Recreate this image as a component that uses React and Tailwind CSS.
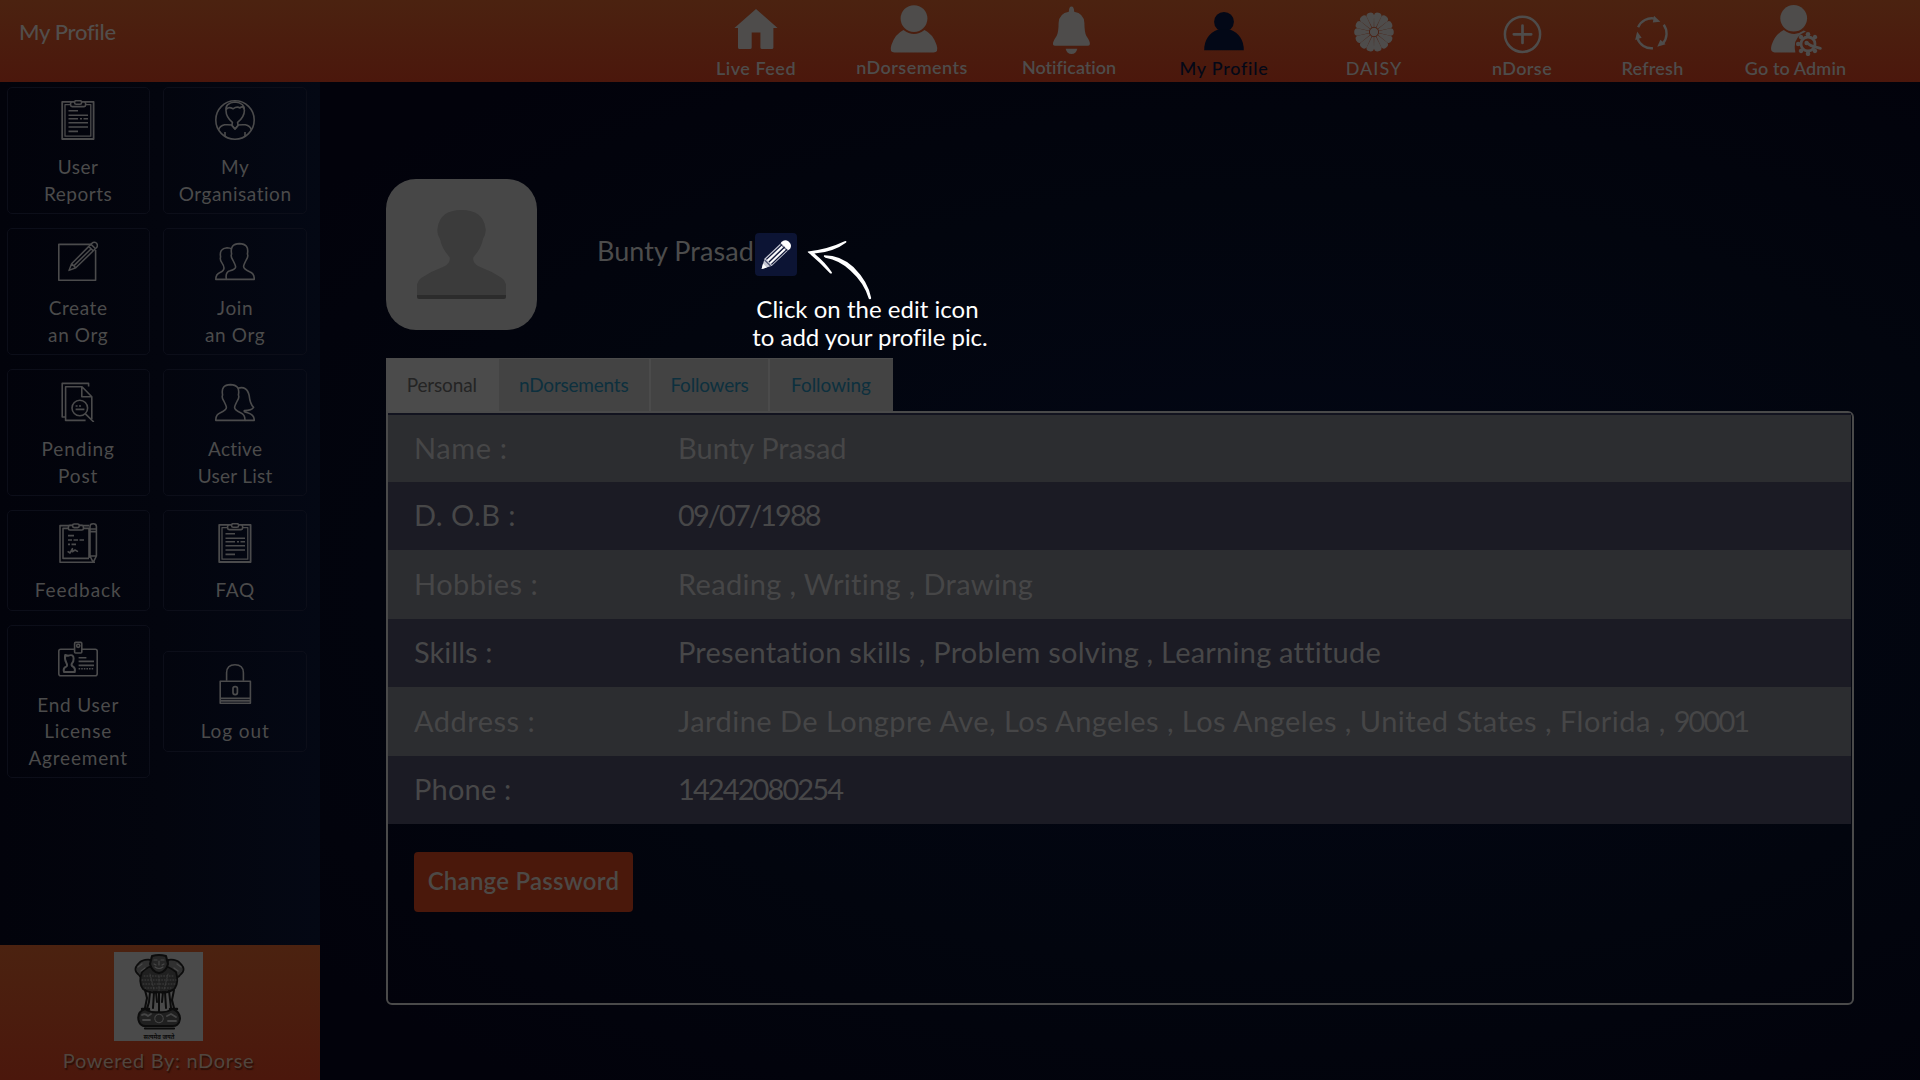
import React from 'react';

/* ---------- top navigation icons (60 x 56 canvas) ---------- */
const NavSvg = ({ children, className = '' }) => (
  <svg viewBox="0 0 60 56" className={`h-14 w-[60px] shrink-0 ${className}`} fill="currentColor">{children}</svg>
);

const Home = () => (
  <NavSvg>
    <path d="M30 9 L51.6 28 H47.4 V47.4 Q47.4 49 45.8 49 H36 Q34.4 49 34.4 47.4 V32.4 H25.7 V47.4 Q25.7 49 24 49 H13.6 Q12 49 12 47.4 V28 H8.4 Z" />
  </NavSvg>
);
const Person = () => (
  <NavSvg>
    <ellipse cx="32" cy="18.6" rx="13.4" ry="13.4" />
    <path d="M21.5 30 Q32 38 42.5 30 Q51 34 54.6 45 Q57 52.5 51.5 52.5 H12.5 Q7 52.5 9.4 45 Q13 34 21.5 30 Z" />
  </NavSvg>
);
const Bell = () => (
  <NavSvg>
    <path d="M32.5 6.5 Q35 6.5 35.2 11.8 Q45 13.5 45.4 23 Q45.4 32 47.4 36 Q51.6 42 50.8 44.6 Q50.4 45.8 48.6 45.8 H16.2 Q14.4 45.8 14 44.6 Q13.4 42 17.6 36 Q19.6 32 19.6 23 Q20 13.5 29.8 11.8 Q30 6.5 32.5 6.5 Z" />
    <path d="M26.6 48.8 H38.4 Q37 54 32.5 54 Q28 54 26.6 48.8 Z" />
  </NavSvg>
);
const Bust = () => (
  <NavSvg>
    <circle cx="30" cy="21.8" r="9.9" />
    <path d="M24 29.5 H36 Q49.8 35 49.8 50.2 H10.2 Q10.2 35 24 29.5 Z" />
  </NavSvg>
);
const petals = Array.from({ length: 14 }, (_, i) => (i * 360) / 14 + 12.86);
const Daisy = () => (
  <NavSvg>
    {petals.map((a) => (
      <path key={a} transform={`rotate(${a} 30 32)`} d="M29.1 27 L26.2 15.6 Q26 12.2 30 12.2 Q34 12.2 33.8 15.6 L30.9 27 Z" />
    ))}
    <circle cx="30" cy="32" r="4.2" />
  </NavSvg>
);
const PlusCircle = () => (
  <NavSvg>
    <g fill="none" stroke="currentColor" strokeWidth="2.5" strokeLinecap="round">
      <circle cx="30.5" cy="34.3" r="17.6" />
      <path d="M30.5 25.6 V43 M21.8 34.3 H39.2" strokeWidth="2.7" />
    </g>
  </NavSvg>
);
const Cycle = () => (
  <NavSvg>
    {[0, 120, 240].map((a) => (
      <g key={a} transform={`rotate(${a} 28.6 33.4)`}>
        <path d="M15.1 27.2 A15 15 0 0 1 31.6 18.6" fill="none" stroke="currentColor" strokeWidth="2.4" />
        <path d="M31 15.8 L37.4 21.8 L29.8 22.6 Z" />
      </g>
    ))}
  </NavSvg>
);
const Admin = () => (
  <NavSvg>
    <ellipse cx="27.7" cy="18.3" rx="13.4" ry="13.2" />
    <path d="M17.8 30 Q28 37.5 37.8 30.6 L40 31.6 Q26 37 29.4 52.4 H8.6 Q3.6 52.4 5.6 45 Q9.4 34 17.8 30 Z" />
    <circle cx="42" cy="44" r="7" fill="none" stroke="currentColor" strokeWidth="2.8" />
    {[0, 45, 135, 180, 225, 270, 315].map((a) => (
      <circle key={a} cx="42" cy="34.2" r="2.3" transform={`rotate(${a} 42 44)`} />
    ))}
    <path d="M41 43 L45 45.6 L54.4 48.4" fill="none" stroke="currentColor" strokeWidth="2.8" strokeLinecap="round" />
    <circle cx="40.6" cy="43" r="2.2" />
  </NavSvg>
);

/* ---------- sidebar icons (40 x 40 canvas) ---------- */
const TileSvg = ({ children }) => (
  <svg viewBox="0 0 40 40" className="size-10 shrink-0 text-[#4b4b4c]" fill="none" stroke="currentColor" strokeWidth="1.6" strokeLinejoin="round">
    {children}
  </svg>
);
const Clipboard = () => (
  <TileSvg>
    <rect x="4.2" y="1.8" width="31.4" height="37.2" strokeWidth="1.8" />
    <rect x="7" y="4.6" width="25.8" height="31.6" strokeWidth="1.3" />
    <rect x="12.6" y="2" width="15" height="4.6" rx="1.5" fill="#03040c" />
    <rect x="16.6" y="0.7" width="7" height="3.6" rx="1.5" fill="#03040c" />
    <path d="M10.5 10.8 H20 M10.5 15.2 H30 M10.5 18.8 H20 M22 18.8 H24 M25.5 18.8 H30 M10.5 22.8 H30 M10.5 27 H30 M10.5 31.4 H20" />
  </TileSvg>
);
const Org = () => (
  <TileSvg>
    <circle cx="20" cy="20" r="19.2" />
    <path d="M11 10.5 Q10 3 20 2 Q30 3 29.4 10.5 Q29.4 17 22.6 22.4 L23 25.4 L20 29 L17 25.4 L17.4 22.4 Q11 17 11 10.5 Z M11 10 Q13 6 18 8.8 Q22 6 25 8 Q28 5 29.4 10" />
    <path d="M17 25 Q14 24.6 9.6 24.8 Q4.6 26 3.6 30 M23 25 Q26 24.6 30.4 24.8 Q35.4 26 36.4 30 M17 25.4 L20 29 L23 25.4 M10 32 V37 M30 32 V37" />
  </TileSvg>
);
const Compose = () => (
  <TileSvg>
    <path d="M33 3.4 H0.8 V39.2 H37.6 V9" />
    <path d="M11 29.4 L13.6 22.8 L33.6 2.6 Q36 0.4 38.4 2 Q40.4 4.4 38.4 6.8 L17.8 26.8 Z M13.6 22.8 L17.8 26.8 M30.6 5.4 L35.4 10 M33 3.4 L37.6 7.8 M16 24.6 L33 8" strokeWidth="1.5" />
  </TileSvg>
);
const TwoMen = () => (
  <TileSvg>
    <path d="M11.4 38.4 Q10 31 15 29.8 Q21 28 20.6 25.6 Q20.4 24 17.8 19 Q15.4 15.4 16.6 13 Q14.6 2.8 24.4 2.6 Q34.4 2.8 32.4 13 Q33.6 15.4 31.2 19 Q28.6 24 28.6 25.6 Q28.6 28 34.6 30.8 Q39.6 32.6 39.2 38.4 Z" />
    <path d="M17 8.2 Q15 6.8 12 6.8 Q4 7.4 5.6 16 Q4.6 18.4 6.8 21.6 Q9 24.8 9 27 Q9 29.8 5 31.4 Q0.8 33 0.8 38.4 H11.4" />
  </TileSvg>
);
const ManWoman = () => (
  <TileSvg>
    <path d="M28.6 38.4 H0.8 Q0.6 32.6 5.4 30.8 Q11.4 28 11.4 25.6 Q11.4 24 8.8 19 Q6.4 15.4 7.6 13 Q5.6 2.8 15.4 2.6 Q25.4 2.8 23.4 13 Q24.6 15.4 22.2 19 Q19.6 24 19.6 25.6 Q19.6 28 25.6 30.8 Q30.2 32.6 30 38.4 Z" />
    <path d="M23 6.2 Q32 3.6 34.2 13.6 Q35 22 38.6 25.4 Q36.8 28.6 29.4 28.6 Q28.4 29.8 32.6 30.8 Q39.6 32.8 39.2 38.4 H30" />
  </TileSvg>
);
const DocSearch = () => (
  <TileSvg>
    <path d="M7.4 35 H4.2 V1.4 H30.6 V4.4" />
    <path d="M27.6 38.4 H7.6 V4.8 H24 L33.8 14.8 V37 M23.8 4.8 V14.8 H33.8" />
    <circle cx="21.8" cy="26" r="7.8" />
    <path d="M27.4 31.8 L35.8 40 M17.6 24 H19.6 M21 24 H23 M17.6 27.4 H26.4" strokeWidth="1.7" />
  </TileSvg>
);
const Feedback = () => (
  <TileSvg>
    <path d="M31 2.6 H2 V39.2 H37 M31 5.4 H5 V35.4 H31" />
    <rect x="10.4" y="2.4" width="15" height="4.6" rx="1.5" fill="#03040c" />
    <rect x="14.6" y="1" width="6.6" height="3.6" rx="1.5" fill="#03040c" />
    <path d="M32 33 V3.4 Q32 0.8 35.2 0.8 Q38.4 0.8 38.4 3.4 V33 L35.2 39.4 Z M32 8.6 H38.4 M32 6 H38.4 M32 33 H38.4 M31 5 V35" />
    <path d="M10 12.6 H16 M10 17 H14 M15.5 17 H20 M21.5 17 H26 M10 21.4 H12 M13.5 21.4 H18 M9.6 28.4 L12 30 L14.4 25.6 V28.8 L17 27 L20 28.6" />
  </TileSvg>
);
const Badge = () => (
  <TileSvg>
    <rect x="0.8" y="11.2" width="38.4" height="26.6" rx="2" />
    <rect x="16.6" y="4.4" width="7.2" height="10.6" rx="1" fill="#03040c" />
    <circle cx="20.2" cy="7.8" r="1.6" />
    <path d="M6 34 Q4.8 30 8.2 28.6 Q10 27.6 8.2 24.4 Q6.4 21.8 7.2 17 L10 17.8 Q15.6 15.6 15.6 20.6 Q15.8 23.4 13.8 25.6 Q13 27.6 15 28.6 Q17.6 30 16.8 34 Z" strokeWidth="2" />
    <path d="M20.6 19.8 H28.4 M20.6 23.4 H36 M20.6 27.4 H36" />
    <path d="M20.6 30.8 H36" strokeDasharray="1.6 1" />
  </TileSvg>
);
const Lock = () => (
  <TileSvg>
    <path d="M11.6 16.8 V8.8 Q11.8 0.8 20 0.8 Q28.2 0.8 28.4 8.8 V16.8" />
    <rect x="5.2" y="17.2" width="30.2" height="22" />
    <path d="M5.2 34.4 H35.4 M5.2 36.9 H35.4" />
    <rect x="18" y="22.6" width="4.4" height="8" rx="2" strokeWidth="1.7" />
  </TileSvg>
);

const NAV = [
  { label: 'Live Feed', Icon: Home, box: 'w-20', text: 'font-semibold tracking-[0.5px]' },
  { label: 'nDorsements', Icon: Person, box: 'ml-[60px] w-28', text: 'font-semibold tracking-[0.45px] -mt-[1.5px]' },
  { label: 'Notification', Icon: Bell, box: 'ml-[54px] w-[94px]', text: 'font-semibold tracking-[-0.02px] -mt-[1.5px]' },
  { label: 'My Profile', Icon: Bust, box: 'ml-[64px] w-[88px] text-[#030817]', text: 'font-medium tracking-[0.75px]' },
  { label: 'DAISY', Icon: Daisy, box: 'ml-[78px] w-14', text: 'font-medium tracking-[1px]' },
  { label: 'nDorse', Icon: PlusCircle, box: 'ml-[90px] w-[60px]', text: 'font-semibold tracking-[0.4px]' },
  { label: 'Refresh', Icon: Cycle, box: 'ml-[70px] w-[61px]', text: 'font-semibold tracking-[0.2px]' },
  { label: 'Go to Admin', Icon: Admin, box: 'ml-[62px] w-[101px]', text: 'font-semibold tracking-[0.1px]' },
];

const TILES = [
  { lines: ['User', 'Reports'], Icon: Clipboard, text: 'tracking-[0.5px]' },
  { lines: ['My', 'Organisation'], Icon: Org, text: 'tracking-[0.53px]' },
  { lines: ['Create', 'an Org'], Icon: Compose, text: 'tracking-[0.6px]' },
  { lines: ['Join', 'an Org'], Icon: TwoMen, text: 'tracking-[0.6px]' },
  { lines: ['Pending', 'Post'], Icon: DocSearch, text: 'tracking-[0.85px]' },
  { lines: ['Active', 'User List'], Icon: ManWoman, text: 'tracking-[0.25px]' },
  { lines: ['Feedback'], Icon: Feedback, text: 'tracking-[0.94px]' },
  { lines: ['FAQ'], Icon: Clipboard, text: 'tracking-[0.6px]' },
  { lines: ['End User', 'License', 'Agreement'], Icon: Badge, text: 'tracking-[0.8px]' },
  { lines: ['Log out'], Icon: Lock, text: 'tracking-[0.9px]' },
];

const ROWS = [
  { label: 'Name :', value: 'Bunty Prasad', l: 'tracking-[0.6px]', v: 'tracking-[0.08px]' },
  { label: 'D. O.B :', digits: '09/07/1988', l: 'tracking-[0.45px]' },
  { label: 'Hobbies :', value: 'Reading , Writing , Drawing', l: 'tracking-[0.45px]', v: 'tracking-[0.33px]' },
  { label: 'Skills :', value: 'Presentation skills , Problem solving , Learning attitude', l: 'tracking-[0.05px]', v: 'tracking-[0.23px]' },
  { label: 'Address :', value: 'Jardine De Longpre Ave, Los Angeles , Los Angeles , United States , Florida , ', digits: '90001', l: 'tracking-[0.5px]', v: 'tracking-[0.47px]' },
  { label: 'Phone :', digits: '14242080254', l: 'tracking-[0.2px]' },
];

const TABS = [
  { label: 'Personal', cls: 'w-[112.5px] pr-px bg-[#4b4b4b] text-[#242424] tracking-[-0.15px]' },
  { label: 'nDorsements', cls: 'w-[150.5px] bg-[#434343] text-[#0d303e] tracking-[-0.22px]' },
  { label: 'Followers', cls: 'w-[119px] bg-[#434343] text-[#0d303e] tracking-[-0.22px]' },
  { label: 'Following', cls: 'w-[125px] pr-px bg-[#434343] text-[#0d303e] tracking-[-0.05px]' },
];

const Emblem = () => (
  <svg viewBox="0 0 89 89" className="size-[89px] bg-[#4a4a4a]" fill="none" stroke="#0c0c0c" strokeLinecap="round" strokeLinejoin="round">
    {/* side lions */}
    <path d="M37 8 Q27 6 22 15 Q20 19 25 23 Q27 26 30 25 L38 15 Z M54 8 Q64 6 69 15 Q71 19 66 23 Q64 26 61 25 L53 15 Z" fill="#303030" strokeWidth="1.8" strokeDasharray="2.4 1" />
    {/* mane and chest */}
    <path d="M28 20 Q24 30 29 37 Q36 42 45 40 Q55 42 61 36 Q65 30 62 20 Q52 12 45 14 Q36 12 28 20 Z" fill="#202020" strokeWidth="1.8" />
    <path d="M30 24 H60 M28 28 H62 M29 32 H61 M31 36 H59" stroke="#3e3e3e" strokeWidth="1" strokeDasharray="1 1.8" />
    <path d="M36 22 L40 38 M54 22 L50 38 M45 24 V40" stroke="#3c3c3c" strokeWidth="0.9" strokeDasharray="2 1.4" />
    {/* front lion head */}
    <path d="M38 4 Q45 2 52 4 L54 12 Q52 20 45 21 Q38 20 36 12 Z" fill="#262626" strokeWidth="2" />
    <path d="M40 8 H43 M47 8 H50 M45 9 V13 M41 15 Q45 18 49 15 M40 12 L42 13 M50 12 L48 13" stroke="#474747" strokeWidth="1.2" />
    <path d="M24 15 L28 12 M27 19 L31 16 M67 15 L63 12 M64 19 L60 16" stroke="#474747" strokeWidth="1.3" />
    {/* legs */}
    <path d="M31 38 L33 46 L31 56 M36 40 L35 50 L33 57 M40 40 L39 56 M42 40 L43 50 M45 40 V59 M49 40 L48 50 M51 40 L52 56 M55 39 L57 56 M60 38 L58 48 L60 56" strokeWidth="2" />
    <path d="M28 57 H35 M56 57 H63" strokeWidth="2.4" />
    {/* abacus */}
    <path d="M31 57 Q23 60 24.5 68 Q26 75 33 74 H57 Q65 75 66 67 Q66 60 59 57 Q52 61 45 60 Q37 61 31 57 Z" fill="#202020" strokeWidth="2" />
    <circle cx="45" cy="66.5" r="4.2" stroke="#454545" strokeWidth="1.1" strokeDasharray="1.3 1" />
    <path d="M28 63 Q31 61 34 64 L37 62 M29 68 H36 M53 64 L57 62 L62 65 M54 69 H62" stroke="#454545" strokeWidth="1.8" />
    <path d="M31 76.5 H60" strokeWidth="2.2" />
    <text x="45" y="86.5" textAnchor="middle" fontSize="6" fontWeight="700" fill="#0c0c0c" stroke="none" textLength="31" lengthAdjust="spacingAndGlyphs" className="font-['Noto_Sans_Devanagari','Noto_Sans',sans-serif]">सत्यमेव जयते</text>
  </svg>
);

const Header = () => (
  <header className="flex h-[82px] w-full bg-linear-to-b from-[#4b2210] to-[#4b170c] text-[#4e4c4b]">
    <h1 className="ml-[19px] mt-[17px] w-[697px] text-[22px] font-medium leading-[30px] tracking-[-0.3px] text-[#524e4c]">My Profile</h1>
    {NAV.map(({ label, Icon, box, text }) => (
      <a key={label} className={`flex shrink-0 flex-col items-center ${box}`}>
        <Icon />
        <span className={`whitespace-nowrap text-[18px] leading-6 ${text}`}>{label}</span>
      </a>
    ))}
  </header>
);

const Sidebar = () => (
  <aside className="flex w-80 shrink-0 flex-col bg-linear-to-r from-[#02030b] via-[#03050e] to-[#040814]">
    <nav className="grid grid-cols-[143.3px_143.3px] items-center gap-[13.7px] pl-[6.5px] pt-[5.2px]">
      {TILES.map(({ lines, Icon, text }) => (
        <a key={lines.join(' ')} className="flex flex-col items-center rounded-[5px] border border-[#0c0e19] pb-[6.3px] pt-3">
          <Icon />
          <span className={`mt-[14px] flex flex-col items-center text-[19px] leading-[26.5px] text-[#4b4b4b] ${text}`}>
            {lines.map((l) => <span key={l} className="whitespace-nowrap">{l}</span>)}
          </span>
        </a>
      ))}
    </nav>
    <footer className="mt-auto flex h-[135px] flex-col items-center bg-linear-to-b from-[#4b2210] to-[#4b170c] pr-[3px] pt-[7px]">
      <Emblem />
      <p className="mt-[5px] text-[20px] leading-[28px] tracking-[0.66px] text-[#50463f] [text-shadow:1px_2px_1px_#2a0f08]">
        Powered By: nDorse
      </p>
    </footer>
  </aside>
);

const Avatar = () => (
  <div className="size-[151px] overflow-hidden rounded-[30px] bg-[#474747]">
    <svg viewBox="0 0 151 151" className="size-full">
      <path d="M31 117 V107 Q31 102 36 98.5 Q46 92 58 87.5 Q65 84 63.6 78 Q56 70 54 60 Q50.4 54 51.6 49 Q54 31 75.5 31 Q97 31 99.4 49 Q100.6 54 97 60 Q95 70 87.4 78 Q86 84 93 87.5 Q105 92 115 98.5 Q120 102 120 107 V117 Z" fill="#3b3b3b" />
      <path d="M31 116 H120 V118 Q120 120 118 120 H33 Q31 120 31 118 Z" fill="#2c2c2c" />
    </svg>
  </div>
);

const EditHint = () => (
  <div className="relative">
    <button className="flex h-[43px] w-[42px] items-center justify-center rounded-[4px] bg-[#0c1434]">
      <svg viewBox="0 0 42 43" className="h-[43px] w-[42px]">
        <path d="M6.6 36 L9.6 25.6 L26.6 9.4 L34 16.6 L17 32.8 Z" fill="#c9cbd6" />
        <path d="M26.4 9 Q30 5.6 33.6 8.6 Q37.6 12 35 16 L33.4 17 L26 10 Z" fill="#fff" />
        <path d="M11.4 26.4 L27 11.6 M14 29 L29.6 14 M16.4 31.4 L32 16.4" stroke="#12193a" strokeWidth="1.3" />
        <path d="M12.6 27.6 L28.2 12.8 M15.2 30.2 L30.8 15.2" stroke="#fff" strokeWidth="1.5" />
        <path d="M25 10.6 L32.6 18" stroke="#12193a" strokeWidth="1" />
        <path d="M6.6 36 L8 30.6 L11.8 34.4 Z" fill="#fff" />
        <path d="M9.6 27 L15.6 33" stroke="#4a5070" strokeWidth="1.2" />
      </svg>
    </button>
    {/* arrow and instruction float over the page */}
    <svg viewBox="0 0 66 62" className="absolute left-[51px] top-[6px] h-[62px] w-[66px]" fill="#fff">
      <path d="M2 12.4 Q22 10.2 38.6 2.2 Q41 1.4 40.2 3.4 Q28 12.8 8.4 14.6 Q19 23 26 33.6 Q25.8 35.4 24 34.2 Q13 22.4 2.4 13.8 Q1.2 12.8 2 12.4 Z" />
      <path d="M18 16.2 Q34.4 16 47.4 28 Q62.4 43 65.2 59 Q64.8 61.2 62.8 59.8 Q58.2 44 44.6 31.8 Q33.6 21.2 19.4 18.8 Q17 17.4 18 16.2 Z" />
    </svg>
    <p className="absolute left-[-4px] top-[62px] w-[238px] text-center text-[24px] leading-7 text-white">
      <span className="mr-[5px] block whitespace-nowrap tracking-[0.02px]">Click on the edit icon</span>
      <span className="block whitespace-nowrap tracking-[-0.03px]">to add your profile pic.</span>
    </p>
  </div>
);

export default function App() {
  return (
    <div className="flex h-[1080px] w-[1920px] flex-col overflow-hidden bg-[#02020c] font-['Lato','Open_Sans',sans-serif] [font-variant-ligatures:none]">
      <Header />
      <div className="flex min-h-0 flex-1">
        <Sidebar />
        <main className="flex flex-1 flex-col bg-radial-[ellipse_at_60%_50%] from-[#030716] from-0% via-[#02050e] via-55% to-[#02020b] to-90% pl-[66px] pt-[97px]">
          <section className="flex h-[151px]">
            <Avatar />
            <div className="ml-[60px] flex pt-[54px]">
              <h2 className="mt-[-9px] w-[158px] whitespace-nowrap text-[27px] leading-[53px] tracking-[0.06px] text-[#4c4c4c]">Bunty Prasad</h2>
              <EditHint />
            </div>
          </section>

          <div className="mt-7 flex h-[53px]">
            {TABS.map(({ label, cls }, i) => (
              <a key={label} className={`flex items-start justify-center whitespace-nowrap border-t border-[#4b4b4b] pt-[13.5px] text-[19px] leading-6 ${i > 1 ? 'border-l-2' : ''} ${cls}`}>{label}</a>
            ))}
          </div>

          <section className="h-[594px] w-[1468px] rounded-[6px] rounded-tl-none border-2 border-[#4a4a4a] pr-px">
            <dl className="border-t-2 border-[#12131f]">
              {ROWS.map(({ label, value, digits, l, v = '' }, i) => (
                <div
                  key={label}
                  className={`flex h-[68.5px] first:h-[66.5px] items-center whitespace-nowrap pb-[2.5px] pl-[26px] text-[29px] leading-[35px] ${
                    i % 2 === 0 ? 'bg-[#2c2d30] text-[#464647]' : 'bg-[#1b1b24] text-[#474748]'
                  }`}
                >
                  <dt className={`w-[264px] ${l}`}>{label}</dt>
                  <dd className="whitespace-pre">
                    {value && <span className={v}>{value}</span>}
                    {digits && <span className="tracking-[-1.9px]">{digits}</span>}
                  </dd>
                </div>
              ))}
            </dl>
            <button className="ml-[26px] mt-[27.5px] flex h-[60px] w-[219px] items-center justify-center rounded-[4px] bg-[#4a180b] pb-px text-[24px] font-semibold tracking-[0.25px] text-[#4d4946]">
              Change Password
            </button>
          </section>
        </main>
      </div>
    </div>
  );
}
